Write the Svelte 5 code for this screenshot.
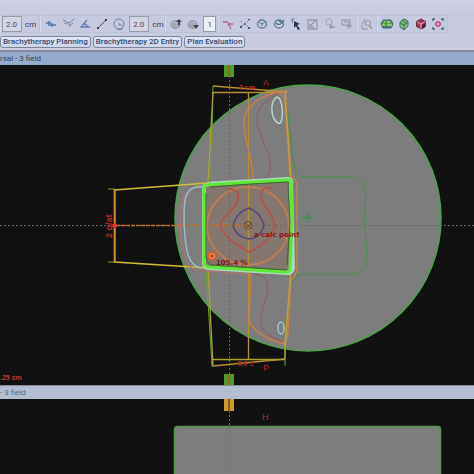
<script>
  let lengthA = $state('2.0');
  let lengthB = $state('2.0');
  let slice = $state('1');
  const tabs = ['Brachytherapy Planning', 'Brachytherapy 2D Entry', 'Plan Evaluation'];
</script>

{#snippet tool(name)}
  <button class="tool" type="button" aria-label={name}>
    <svg viewBox="0 0 14 14" width="14" height="14" fill="none" stroke-width="1">
      {#if name === 'Add seed'}
        <path d="M2 6h5M5 8h7M5 4v5M8 6v4" stroke="#5579ac" stroke-width="1.4" />
      {:else if name === 'Angle probe'}
        <path d="M2 3l6 3 5-4M7 5l2 5M9 8l3-2M3 6l3 1" stroke="#76849e" />
      {:else if name === 'Measure angle'}
        <path d="M9 3L3 10h9M6 7q3 0 3 3" stroke="#657ab9" stroke-width="1.3" />
      {:else if name === 'Measure distance'}
        <path d="M3 11L11 3" stroke="#434c60" />
        <path d="M2 10h2v2H2zM10 2h2v2h-2z" fill="#34405c" />
      {:else if name === 'Circle'}
        <circle cx="7" cy="7" r="5" stroke="#7184a2" />
        <path d="M7 6v2h3M5 12l4 1 2-3" stroke="#7184a2" />
      {:else if name === 'Slice up' || name === 'Slice down'}
        <ellipse cx="6.5" cy="7.500" rx="4.500" ry="4" fill="#b4b9c6" stroke="#8b919d" />
        <path d="M2 7h8M3 9h7M6 4v7" stroke="#9ba1ad" />
        {#if name === 'Slice up'}
          <path d="M7 5l3-3 3 3zM9 5h2v3H9z" fill="#3f4654" />
        {:else}
          <path d="M7 8h6l-3 4z" fill="#3f4654" />
        {/if}
      {:else if name === 'Split contour'}
        <path d="M2 5h4l3 2h3M7 7q2 2 3 5" stroke="#bc6590" stroke-width="1.3" />
      {:else if name === 'Edit points'}
        <path d="M2 10l5-3 5-5M7 7l4 4" stroke="#8795ae" />
        <path d="M2 9h2v2H2zM6 6h1v2H6zM10 2h2v1h-2zM10 10h2v2h-2zM3 4h1v1H3z" fill="#475d84" />
      {:else if name === 'Contour' || name === 'Freehand contour'}
        <ellipse cx="7" cy="7" rx="4.500" ry="4" stroke="#55808c" stroke-width="1.3" />
        {#if name === 'Contour'}
          <path d="M4 5l3 2 3-2M7 7v2" stroke="#526e87" />
        {:else}
          <path d="M4 6q4 4 8-3M7 4l4 2" stroke="#456979" stroke-width="1.2" />
        {/if}
      {:else if name === 'Pick'}
        <path d="M5 4l6 3-3 1 3 4-2 1-2-4-2 2z" fill="#253250" />
        <path d="M2 3l2 1M4 1v2M3 6l1-1" stroke="#4b5a79" />
      {:else if name === 'Edit'}
        <path d="M2 3h9v9H2zM4 9l6-6M4 7v3h4" stroke="#999ca6" stroke-width="1.3" />
      {:else if name === 'Add point'}
        <circle cx="6" cy="5" r="3" stroke="#a2a5b0" />
        <path d="M8 7v5M6 10h6" stroke="#9699a4" stroke-width="1.4" />
      {:else if name === 'Add region'}
        <path d="M2 3h8v5H2zM4 5h5" stroke="#a2a5b0" stroke-width="1.4" />
        <path d="M9 6v6M6 9h6" stroke="#999ca7" stroke-width="1.4" />
      {:else if name === 'Inspect'}
        <path d="M2 12V6l3-3v5M2 12h6" stroke="#a2a5b0" stroke-width="1.3" />
        <circle cx="8" cy="6" r="2.500" stroke="#999ca7" />
        <path d="M9 8l3 4" stroke="#999ca7" stroke-width="1.6" />
      {:else if name === 'Dose plane'}
        <path d="M3 3h8l2 4-2 4H3L1 7z" fill="#5c9f45" stroke="#39628b" />
        <path d="M2 8h10M4 5h6" stroke="#a7d56a" stroke-width="1.3" />
        <path d="M2 10h9M6 4v7" stroke="#395f89" />
      {:else if name === 'Dose volume'}
        <path d="M7 2l4 2v5l-4 4-4-3V5z" fill="#8dbc6c" stroke="#3b6f81" />
        <path d="M3 6l4 2 4-3M7 8v4M5 3l4 3" stroke="#3e8060" stroke-width="1.2" />
      {:else if name === 'Model view'}
        <path d="M2.500 4.500L7 2l4.500 2.500v5L7 12 2.500 9.500z" fill="#a23a5d" stroke="#722b4a" />
        <path d="M3 5l4 2 4-2M7 7v5" stroke="#e5a8bd" />
        <path d="M8 8l3-2v4l-3 2z" fill="#48213b" />
      {:else}
        <circle cx="7" cy="7" r="2.500" fill="#cf6b94" stroke="#b84b78" />
        <path d="M6 7h2M7 6v2" stroke="#f0cad8" />
        <path d="M2 4V2h2M10 2h2v2M12 10v2h-2M4 12H2v-2" stroke="#4c6380" stroke-width="1.4" />
      {/if}
    </svg>
  </button>
{/snippet}

<main>
  <header>
    <div class="toolbar" role="toolbar" aria-label="Planning tools">
      <div class="group first">
        <label><input aria-label="Length" bind:value={lengthA} /><span>cm</span></label>
      </div>
      <div class="group wide">
        {#each ['Add seed', 'Angle probe', 'Measure angle', 'Measure distance', 'Circle'] as name}
          {@render tool(name)}
        {/each}
        <label><input aria-label="Diameter" bind:value={lengthB} /><span>cm</span></label>
      </div>
      <div class="group wide">
        {@render tool('Slice up')}
        {@render tool('Slice down')}
        <input class="slice" aria-label="Slice" bind:value={slice} />
      </div>
      <div class="group">
        {#each ['Split contour', 'Edit points', 'Contour', 'Freehand contour', 'Pick', 'Edit', 'Add point', 'Add region'] as name}
          {@render tool(name)}
        {/each}
      </div>
      <div class="group">{@render tool('Inspect')}</div>
      <div class="group">
        {#each ['Dose plane', 'Dose volume', 'Model view', 'Fit view'] as name}
          {@render tool(name)}
        {/each}
      </div>
    </div>
    <nav>
      {#each tabs as tab}
        <button type="button">{tab}</button>
      {/each}
    </nav>
  </header>

  <section>
    <h2>rsal - 3 field</h2>
    <svg class="view" viewBox="0 65 474 320" height="320" role="img" aria-label="Transversal dose distribution">
      <circle cx="308" cy="218" r="133" fill="#7d7d7d" stroke="#4aa545" stroke-width="1.500" />
      <path d="M205 186L290 181L291 271L205 266Z" fill="#837770" />
      <g fill="none">
        <path d="M0 225.500H474M229.500 76V375" stroke="#686868" stroke-dasharray="2 2" />
        <path d="M286 100L294 165Q295 177 304 177H350Q365 178 366 195Q363 220 366 240L367 257Q366 274 350 274H302Q292 275 290 293L285 350" stroke="#489247" />
        <path d="M211 180V178L213 86M206 270L212 365M212 362v5M285 346v20M108 189h7M108 262h7" stroke="#65a92c" />
        <path d="M213 86L288 92M213 92.500H282M248.500 92V360M213 366L285 359" stroke="#b98d32" stroke-width="1.300" />
        <path d="M213 92L208 182M208 268L213 366M285 359V340M213 359.500H285" stroke="#b0a231" stroke-width="1.300" />
        <path d="M208 183L114.500 190V262L208 268" stroke="#d1bc36" stroke-width="1.500" />
        <path d="M116 225.500H247" stroke="#be702f" stroke-width="1.500" stroke-dasharray="4 1" />
        <path d="M115 190V262" stroke="#d17b2d" stroke-width="1.500" />
        <path d="M204 187Q181 181 180 220Q182 266 195 270L248 274" stroke="#a77772" stroke-width="1.500" />
        <path d="M280 92C258 104 255 113 258 127C262 143 273 156 270 172Q267 179 258 180M254 274Q269 275 268 290C266 304 256 319 263 329Q271 339 284 342" stroke="#8f6262" stroke-width="1.300" />
        <path d="M282 91Q250 98 244 118C242 138 254 160 253 178Q250 184 206 186M250 274C252 291 247 313 250 323Q260 338 282 343Q288 343 288 330L291 280Q297 275 297 267V184Q296 179 290 175L285 105Q284 88 270 94" stroke="#c38150" stroke-width="1.500" />
        <path d="M285 90L291 180M291 268L285 347" stroke="#c4a22f" stroke-width="1.500" />
        <path d="M204 187C183 184 184 203 184 220C185 253 189 267 202 268" stroke="#94c0c8" stroke-width="1.500" />
        <path d="M277 97C270 101 270 118 278 123C284 127 284 98 277 97Z" stroke="#b1d4d4" stroke-width="1.500" />
        <ellipse cx="281" cy="328" rx="3" ry="6" stroke="#9bc5cd" stroke-width="1.500" />
        <ellipse cx="248" cy="226" rx="41" ry="39" stroke="#bd7d54" stroke-width="2" />
        <path d="M228 189Q240 189 238 199Q236 208 222 220Q219 227 224 233Q233 244 249 252Q267 245 275 228Q276 222 263 202Q258 190 266 188H272" stroke="#bd4c47" stroke-width="1.500" />
        <path d="M249 208Q260 212 264 225Q261 238 249 239Q236 237 233 226Q236 212 249 208Z" stroke="#55477d" stroke-width="1.500" />
        <path d="M204 187Q205 183 220 183L288 179Q292 179 291 184L293 268Q292 273 287 273L208 268Q203 268 204 259Z" stroke="#a5dbb5" stroke-width="4" />
        <path d="M204 187Q205 184 220 184L288 180Q291 180 291 184L292 222L290 268Q290 272 286 272L208 267Q203 266 204 259Z" stroke="#61e536" stroke-width="3" />
        <path d="M206 193V258Q207 264 212 265L287 270M210 187L251 184L288 182Q289 207 290 222L287 265" stroke="#376c25" />
        <circle cx="248" cy="225.500" r="4" stroke="#6e4939" />
        <path d="M245 223l6 6M251 223l-6 6" stroke="#6e4939" />
        <path d="M302 217.500h11M307.500 212v11" stroke="#399447" stroke-width="1.500" />
      </g>
      <circle cx="212" cy="256" r="4" fill="#ed7542" stroke="#de5b25" stroke-width="1.500" />
      <circle cx="212" cy="256" r="1" fill="#742718" />
      <path d="M111 225.500l4-3 3 3-3 3z" fill="#df3929" />
      <path d="M224 65h10v12h-10zM224 374h10v11h-10z" fill="#4f9d27" />
      <path d="M229 65v12M229 374v11" stroke="#886d20" stroke-width="2" />
      <g class="marks">
        <text class="axis" x="263" y="86">A</text>
        <text class="axis" x="263" y="371">P</text>
        <text x="239" y="90">7 cm</text>
        <text x="238" y="366">8.0 c</text>
        <text class="side" transform="translate(112 238) rotate(-90)">2 g/at</text>
        <text class="dose" x="254" y="237">a calc point</text>
        <text class="dose" x="216" y="265">105.4 %</text>
        <text class="scale" x="0" y="380">.25 cm</text>
      </g>
    </svg>
  </section>

  <section class="lower">
    <h2>- 3 field</h2>
    <svg class="view" viewBox="0 399 474 75" height="75" role="img" aria-label="Frontal view">
      <path d="M174.500 476V430Q174.500 426.500 178 426.500H438Q440.500 426.500 440.500 430V476" fill="#7d7d7d" stroke="#569650" stroke-width="1.500" />
      <path d="M229.500 411V474" stroke="#707070" stroke-dasharray="2 2" />
      <path d="M224 399h10v12h-10z" fill="#c99d2c" />
      <path d="M229 399v12" stroke="#925b1c" stroke-width="2" />
      <g class="marks"><text class="axis" x="262" y="420">H</text></g>
    </svg>
  </section>
</main>

<style>
  :global(body) {
    margin: 0;
    background: #111;
  }
  main {
    display: flex;
    flex-direction: column;
    min-height: 100vh;
    overflow: hidden;
    background: #111;
    font-family: Roboto, "Noto Sans", sans-serif;
    font-size: 8px;
    color: #34405a;
  }
  header {
    box-sizing: border-box;
    padding-top: 15px;
    border-bottom: 2px solid #858b98;
    background: linear-gradient(#cfd1e5, #c7cade 15px, #c9cce0);
  }
  .toolbar {
    display: flex;
    height: 18px;
  }
  .group {
    box-sizing: border-box;
    display: flex;
    align-items: center;
    gap: 3px;
    padding: 0 2px;
    border: 1px solid #bcc2d5;
    border-left-color: #d8dbea;
  }
  .first {
    padding: 0 3px 0 1px;
  }
  .wide {
    padding: 0 1px 0 3px;
  }
  label {
    display: flex;
    align-items: center;
    gap: 3px;
  }
  input {
    box-sizing: border-box;
    width: 20px;
    height: 16px;
    margin: 0;
    padding: 0 3px;
    border: 1px solid #969caa;
    background: #d4d5e2;
    color: #454b5b;
    font: inherit;
  }
  .slice {
    width: 13px;
    background: #eceef5;
  }
  .tool {
    display: flex;
    padding: 0;
    border: 0;
    background: none;
  }
  nav {
    display: flex;
    gap: 2px;
    padding: 3px 0 2px;
  }
  nav button {
    box-sizing: border-box;
    height: 12px;
    padding: 0 2px;
    border: 1px solid #7c879d;
    border-radius: 3px;
    background: linear-gradient(#e2e6f3, #cdd4e6);
    color: #31486e;
    font: 500 8px/10px Roboto, "Noto Sans", sans-serif;
    white-space: nowrap;
  }
  h2 {
    box-sizing: border-box;
    margin: 0;
    height: 13px;
    background: #96abc9;
    color: #35445d;
    font-size: 8px;
    font-weight: 400;
    line-height: 13px;
  }
  .lower h2 {
    height: 14px;
    border-top: 1px solid #898994;
    background: #b3bfd0;
    color: #626a77;
  }
  .view {
    display: block;
    width: 100%;
  }
  .marks {
    fill: #b52a22;
    font-family: "Liberation Sans", sans-serif;
    font-size: 7px;
    font-weight: 700;
  }
  .axis {
    font-size: 9px;
    font-weight: 400;
  }
  .side {
    font-size: 9px;
  }
  .dose {
    fill: #8d1715;
    font-family: "DejaVu Sans", sans-serif;
  }
  .scale {
    fill: #c5362c;
  }
</style>
